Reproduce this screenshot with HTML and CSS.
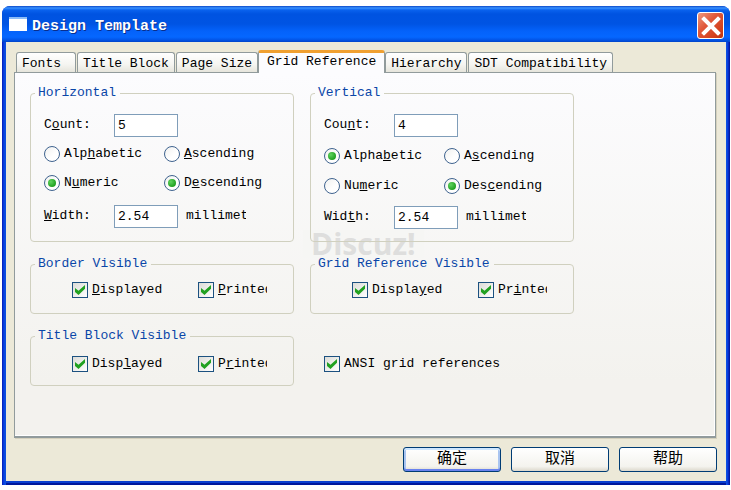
FILE: index.html
```html
<!DOCTYPE html>
<html lang="en">
<head>
<meta charset="utf-8">
<title>Design Template</title>
<link rel="stylesheet" href="styles.css">
</head>
<body>
<main class="window">
  <header class="titlebar">
    <span class="titlebar__icon"></span>
    <h1 class="titlebar__text">Design Template</h1>
    <button class="close" type="button" aria-label="Close">
      <svg viewBox="0 0 26 26" width="26" height="26" aria-hidden="true"><path d="M6 6 20 20M20 6 6 20" fill="none" stroke="#fff" stroke-width="4" stroke-linecap="square"/></svg>
    </button>
  </header>
  <form class="client">
    <div class="tabs" role="tablist">
      <button class="tab" type="button" role="tab">Fonts</button>
      <button class="tab" type="button" role="tab">Title Block</button>
      <button class="tab" type="button" role="tab">Page Size</button>
      <button class="tab tab--active" type="button" role="tab" aria-selected="true">Grid Reference</button>
      <button class="tab" type="button" role="tab">Hierarchy</button>
      <button class="tab" type="button" role="tab">SDT Compatibility</button>
    </div>
    <section class="panel" role="tabpanel">
      <div class="watermark">Discuz!</div>
      <div class="groups">
        <fieldset class="group">
          <legend>Horizontal</legend>
          <div class="axis axis--tight">
            <div class="field"><label for="h-count">C<u>o</u>unt:</label><input class="text" id="h-count" type="text" value="5"></div>
            <div class="options">
              <label class="option"><input type="radio" name="h-style"><span>Alp<u>h</u>abetic</span></label>
              <label class="option"><input type="radio" name="h-order"><span><u>A</u>scending</span></label>
            </div>
            <div class="options">
              <label class="option"><input type="radio" name="h-style" checked><span>N<u>u</u>meric</span></label>
              <label class="option"><input type="radio" name="h-order" checked><span>D<u>e</u>scending</span></label>
            </div>
            <div class="field"><label for="h-width"><u>W</u>idth:</label><input class="text" id="h-width" type="text" value="2.54"><span class="unit">millimeters</span></div>
          </div>
        </fieldset>
        <fieldset class="group">
          <legend>Vertical</legend>
          <div class="axis">
            <div class="field"><label for="v-count">Cou<u>n</u>t:</label><input class="text" id="v-count" type="text" value="4"></div>
            <div class="options">
              <label class="option"><input type="radio" name="v-style" checked><span>Alpha<u>b</u>etic</span></label>
              <label class="option"><input type="radio" name="v-order"><span>A<u>s</u>cending</span></label>
            </div>
            <div class="options">
              <label class="option"><input type="radio" name="v-style"><span>Nu<u>m</u>eric</span></label>
              <label class="option"><input type="radio" name="v-order" checked><span>Des<u>c</u>ending</span></label>
            </div>
            <div class="field"><label for="v-width">Wid<u>t</u>h:</label><input class="text" id="v-width" type="text" value="2.54"><span class="unit">millimeters</span></div>
          </div>
        </fieldset>
        <fieldset class="group">
          <legend>Border Visible</legend>
          <div class="checks">
            <label class="option"><input type="checkbox" checked><span><u>D</u>isplayed</span></label>
            <label class="option"><input type="checkbox" checked><span class="clipped"><u>P</u>rinted</span></label>
          </div>
        </fieldset>
        <fieldset class="group">
          <legend>Grid Reference Visible</legend>
          <div class="checks">
            <label class="option"><input type="checkbox" checked><span>Displa<u>y</u>ed</span></label>
            <label class="option"><input type="checkbox" checked><span class="clipped">Pr<u>i</u>nted</span></label>
          </div>
        </fieldset>
        <fieldset class="group group--low">
          <legend>Title Block Visible</legend>
          <div class="checks">
            <label class="option"><input type="checkbox" checked><span>Disp<u>l</u>ayed</span></label>
            <label class="option"><input type="checkbox" checked><span class="clipped">P<u>r</u>inted</span></label>
          </div>
        </fieldset>
        <label class="option option--alone"><input type="checkbox" checked><span>ANSI <u>g</u>rid references</span></label>
      </div>
    </section>
    <footer class="actions" lang="zh-CN">
      <button class="button button--default" type="submit">确定</button>
      <button class="button" type="button">取消</button>
      <button class="button" type="button">帮助</button>
    </footer>
  </form>
</main>
</body>
</html>
```
FILE: styles.css
```css
* {
  box-sizing: border-box;
}

body {
  margin: 0;
  min-height: 100vh;
  padding: 6px 1px 5px 2px;
  display: flex;
  background: #fff;
  color: #000;
  font: 13px/16px "Liberation Mono", "Noto Sans CJK SC", monospace;
}

button,
input {
  font: inherit;
  color: inherit;
  margin: 0;
}

.window {
  flex: 1;
  display: flex;
  flex-direction: column;
  border-radius: 8px 8px 0 0;
  background: linear-gradient(to right, #0019a8 0, #0831d9 1px, #0c4fe0 3px, #0c4fe0 calc(100% - 3px), #0831d9 calc(100% - 2px), #00138c 100%);
  overflow: hidden;
}

.titlebar {
  height: 36px;
  flex: none;
  display: flex;
  align-items: center;
  gap: 5px;
  padding: 2px 6px 0 7px;
  background: linear-gradient(#0b48c8 0, #3a93ff 2px, #0a62ee 4px, #0053e1 8px, #0054e3 18px, #0462fa 25px, #0567ff 31px, #0254e6 34px, #0144c8 36px);
}

.titlebar__icon {
  width: 18px;
  height: 14px;
  margin-bottom: 2px;
  background: #fff;
  border-top: 2px solid #8cbcf8;
}

.titlebar__text {
  flex: 1;
  margin: 0;
  padding-top: 3px;
  font-size: 15px;
  line-height: 18px;
  font-weight: bold;
  color: #fff;
  text-shadow: 1px 1px #0a2f8c;
}

.close {
  display: grid;
  place-items: center;
  width: 27px;
  height: 27px;
  padding: 0;
  border: 1px solid #fff;
  border-radius: 3px;
  background: linear-gradient(135deg, #ee9a80, #e0583a 40%, #d3401c 80%, #b8330f);
}

.client {
  flex: 1;
  display: flex;
  flex-direction: column;
  margin: 0 4px 4px;
  padding: 8px 10px 9px 8px;
  background: #ece9d8;
  box-shadow: 0 2px #0a3fd0, 0 4px #00189c;
}

.tabs {
  display: flex;
  align-items: flex-end;
  gap: 1px;
  padding-left: 2px;
}

.tab {
  height: 20px;
  min-width: 60px;
  padding: 3px 5px 0;
  border: 1px solid #919b9c;
  border-bottom: 0;
  border-radius: 3px 3px 0 0;
  background: linear-gradient(#fff, #f5f5f1 60%, #e6e5dc);
  line-height: 16px;
  text-align: left;
  white-space: nowrap;
}

.tab--active {
  height: 23px;
  margin: 0 -1px -1px;
  padding: 1px 8px 4px;
  border-top: 3px solid #f0a030;
  background: #fcfcfe;
  position: relative;
  z-index: 1;
}

.panel {
  flex: 1;
  position: relative;
  padding: 12px 15px;
  border: 1px solid #919b9c;
  border-bottom-width: 2px;
  background: linear-gradient(#fcfcfe, #f3f2ee 85%);
  box-shadow: inset -1px -1px #fff, 1px 1px #d5d1bd;
}

.groups {
  position: relative;
  display: grid;
  grid-template-columns: repeat(2, minmax(0, 264px));
  gap: 14px 16px;
}

.group {
  min-width: 0;
  margin: 0;
  padding: 0 0 12px;
  border: 1px solid #d0d0bf;
  border-radius: 4px;
}

.group legend {
  margin-left: 4px;
  padding: 0 4px 0 3px;
  color: #0a46a8;
}

.axis {
  display: grid;
  grid-template-rows: 24px 22px 22px 24px;
  gap: 8px;
  padding: 12px 0 0 13px;
}

.axis--tight {
  grid-template-rows: 24px 18px 24px 26px;
}

.field,
.options,
.option {
  display: flex;
  align-items: center;
}

.field label {
  width: 70px;
}

.text {
  width: 64px;
  height: 23px;
  padding: 0 3px;
  border: 1px solid #7f9db9;
  border-radius: 0;
  background: #fff;
}

.unit {
  width: 60px;
  margin-left: 8px;
  overflow: hidden;
}

.options .option {
  width: 120px;
}

.option {
  gap: 4px;
  white-space: nowrap;
}

.option input {
  appearance: none;
  flex: none;
  display: grid;
  place-items: center;
  width: 16px;
  height: 16px;
  border: 1px solid #1c5180;
  background: linear-gradient(135deg, #dcdcd7, #fff);
}

.option input[type="radio"] {
  border-color: #3f638f;
  border-radius: 50%;
  background: linear-gradient(135deg, #f0f0ee, #fff 60%);
}

.option input[type="radio"]:checked::before {
  content: "";
  width: 8px;
  height: 8px;
  border-radius: 50%;
  background: radial-gradient(circle at 35% 35%, #5fd35f, #21a121 70%);
}

.option input[type="checkbox"]:checked::before {
  content: "";
  width: 10px;
  height: 10px;
  background: #21a121;
  clip-path: polygon(0 30%, 35% 58%, 100% 0, 100% 38%, 35% 100%, 0 70%);
}

.checks {
  display: grid;
  grid-template-columns: 126px 1fr;
  padding: 10px 0 3px 41px;
}

.group--low .checks {
  padding: 12px 0 1px 41px;
}

.clipped {
  width: 49px;
  overflow: hidden;
}

.option--alone {
  align-self: start;
  margin: 28px 0 0 14px;
}

.watermark {
  position: absolute;
  left: 288px;
  top: 157px;
  padding: 0 8px;
  background: #f6f6f4;
  color: #dededd;
  font: bold 30px/28px "Open Sans", sans-serif;
}

.actions {
  display: flex;
  justify-content: flex-end;
  gap: 10px;
  margin-top: 9px;
  margin-right: -1px;
}

.button {
  width: 98px;
  height: 25px;
  padding: 0;
  border: 1px solid #003c74;
  border-radius: 3px;
  background: linear-gradient(#fff, #f4f3ee 80%, #dcd8cc);
  font-size: 15px;
  line-height: 22px;
}

.button--default {
  box-shadow: inset 0 2px #cee7ff, inset 0 -2px #6982ee, inset 2px 0 #a9c4f0, inset -2px 0 #a9c4f0;
}
```
